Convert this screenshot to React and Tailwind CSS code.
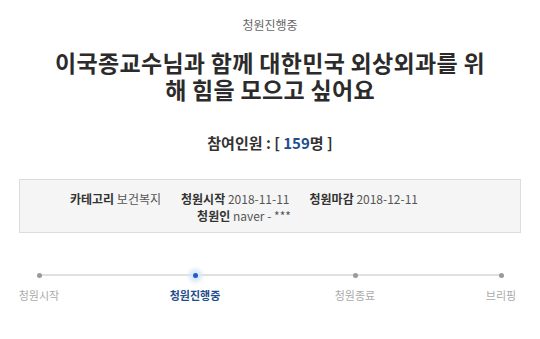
import React from "react";

export default function App() {
  const steps = [
    { label: "청원시작", active: false, ml: "ml-[9px]" },
    { label: "청원진행중", active: true, ml: "ml-[96px]" },
    { label: "청원종료", active: false, ml: "ml-[100px]" },
    { label: "브리핑", active: false, ml: "ml-[86px]" },
  ];
  return (
    <div
      className="w-[540px] h-[339px] bg-white overflow-hidden text-[#333]"
      style={{ fontFamily: '"Noto Sans CJK KR", "Noto Sans", sans-serif' }}
    >
      <div className="pt-[16px] text-center text-[12px] leading-[18px] text-[#666]">청원진행중</div>
      <h1 className="mx-auto mt-[15px] w-[436px] break-all text-center text-[23px] leading-[27px] font-bold tracking-[0.3px] text-[#2b2b2b]">
        이국종교수님과 함께 대한민국 외상외과를 위해 힘을 모으고 싶어요
      </h1>
      <div className="mt-[30px] text-center text-[15px] leading-[20px] font-bold text-[#333]">
        참여인원 : [ <span className="text-[#1f4e8c]">159</span>명 ]
      </div>
      <div className="mx-[19px] mt-[26px] h-[54px] border border-[#dcdcdc] bg-[#f5f5f5] pl-[20px] pr-[72px] pt-[10px]">
        <div className="flex flex-wrap justify-center gap-x-[20px] text-[12px] leading-[17px]">
          <span>
            <b className="font-bold text-[#333]">카테고리</b> <span className="text-[#555]">보건복지</span>
          </span>
          <span>
            <b className="font-bold text-[#333]">청원시작</b> <span className="text-[#555]">2018-11-11</span>
          </span>
          <span>
            <b className="font-bold text-[#333]">청원마감</b> <span className="text-[#555]">2018-12-11</span>
          </span>
          <span>
            <b className="font-bold text-[#333]">청원인</b> <span className="text-[#555]">naver - ***</span>
          </span>
        </div>
      </div>
      <div className="relative mt-[36px] h-[40px]">
        <div className="absolute left-[39px] right-[39px] top-[5px] h-[2px] bg-[#e0e0e0]" />
        <div className="relative flex">
          {steps.map((s, i) => (
            <div key={i} className={"flex w-[60px] flex-col items-center " + s.ml}>
              <div className="flex h-[12px] items-center justify-center">
                {s.active ? (
                  <div className="h-[5px] w-[5px] rounded-full bg-[#1e5fbf] shadow-[0_0_4px_4px_#d8e6fa]" />
                ) : (
                  <div className="h-[5px] w-[5px] rounded-full bg-[#999]" />
                )}
              </div>
              <div
                className={
                  "mt-[6px] whitespace-nowrap text-[11px] leading-[16px] " +
                  (s.active ? "font-bold text-[#1f4e8c]" : "text-[#aaa]")
                }
              >
                {s.label}
              </div>
            </div>
          ))}
        </div>
      </div>
    </div>
  );
}
